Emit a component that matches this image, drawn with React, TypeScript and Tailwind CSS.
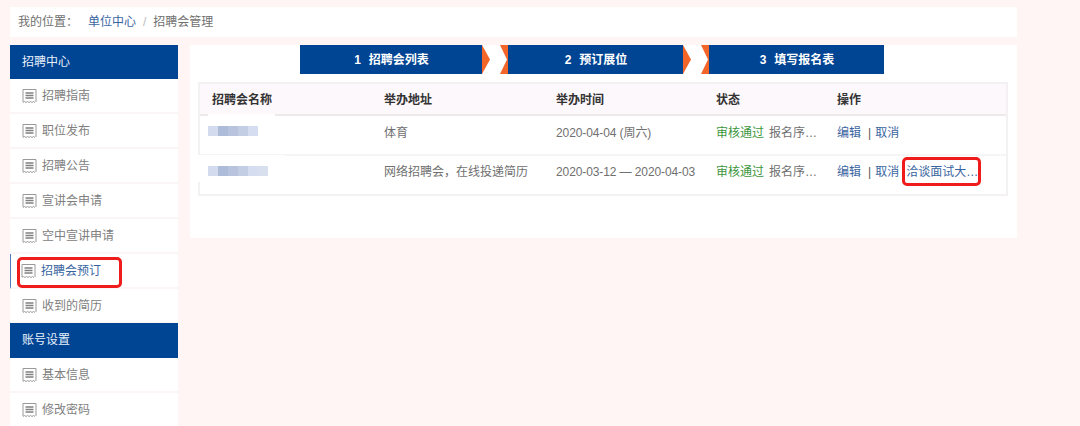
import React from 'react';

const font = "font-['Liberation_Sans','Noto_Sans_CJK_SC',sans-serif]";

function ReceiptIcon() {
  return (
    <svg width="15" height="16" viewBox="0 0 15 16" fill="none" className="shrink-0">
      <path d="M1 14V1.500H14V14" stroke="#999" strokeWidth="1" />
      <path d="M1 14.500l1.500-1 1.500 1 1.500-1 1.500 1 1.500-1 1.500 1 1.500-1 1.500 1" stroke="#999" strokeWidth="1" />
      <path d="M3.500 5H11.500M3.500 7.500H11.500M3.500 10H11.500" stroke="#808080" strokeWidth="1.500" />
    </svg>
  );
}

function MenuHeader({ children, second }: { children: React.ReactNode; second?: boolean }) {
  return (
    <div
      className={
        second
          ? 'relative h-[35px] -mt-[1px] bg-[#004494] text-[#e8f0fa] text-[12px] leading-[35px] pl-[12px]'
          : 'h-[34px] bg-[#004494] text-[#e8f0fa] text-[12px] leading-[35px] pl-[12px]'
      }
    >
      {children}
    </div>
  );
}

function MenuItem({ label, active, marked }: { label: string; active?: boolean; marked?: boolean }) {
  return (
    <div
      className={
        active
          ? 'relative h-[35px] bg-white border-b-2 border-[#fbf5f5] border-l border-l-[#4a7cc0] flex items-center gap-[5px] pl-[10px] text-[12px] text-[#3a659f]'
          : 'relative h-[35px] bg-white border-b-2 border-[#fbf5f5] flex items-center gap-[5px] pl-[12px] text-[12px] text-[#808080]'
      }
    >
      <ReceiptIcon />
      <span>{label}</span>
      {marked && (
        <div className="absolute left-[6px] top-[3px] w-[105px] h-[31px] border-[3px] border-[#f01c1c] rounded-[5px]" />
      )}
    </div>
  );
}

function Step({ n, label, width, notch, arrow }: { n: string; label: string; width: string; notch?: boolean; arrow?: boolean }) {
  return (
    <div className="flex h-[29px]">
      {notch && (
        <svg width="8" height="29" viewBox="0 0 8 29">
          <path d="M0 0H8V29H0L7 14.500Z" fill="#f4652a" />
        </svg>
      )}
      <div className={`${width} bg-[#004494] text-white text-[12px] font-bold flex items-center justify-center gap-[8px] pl-[1px]`}>
        <span>{n}</span>
        <span>{label}</span>
      </div>
      {arrow && (
        <svg width="8" height="29" viewBox="0 0 8 29">
          <path d="M0 0L8 14.500L0 29Z" fill="#f4652a" />
        </svg>
      )}
    </div>
  );
}

function Blur({ wide }: { wide?: boolean }) {
  return (
    <div className={wide ? 'flex h-[10px] mt-[2px]' : 'flex h-[10px] mt-[1px]'}>
      <span className="w-[10px] bg-[#d3dcee]" />
      <span className="w-[10px] bg-[#adbdd9]" />
      <span className="w-[10px] bg-[#b8c3de]" />
      <span className="w-[10px] bg-[#c3cde3]" />
      <span className="w-[10px] bg-[#d5def0]" />
      {wide && <span className="w-[10px] bg-[#d8e0f0]" />}
    </div>
  );
}

function Row({ wide, address, time, last }: { wide?: boolean; address: string; time: string; last?: boolean }) {
  return (
    <div
      className={
        last
          ? 'flex h-[38px] pt-[8px] text-[12px] text-[#707070] leading-[17px]'
          : 'flex h-[40px] pt-[9px] text-[12px] text-[#707070] leading-[17px] border-b-2 border-[#f5f5f5]'
      }
    >
      <div className="w-[184px] pl-[8px]">
        <Blur wide={wide} />
      </div>
      <div className="w-[172px]">{address}</div>
      <div className="w-[160px] tracking-[-0.1px]">{time}</div>
      <div className="w-[121px] flex">
        <span className="text-[#3c963c] w-[53px]">审核通过</span>
        <span>报名序…</span>
      </div>
      <div className="flex-1 flex text-[#3a659f]">
        <span>编辑</span>
        <span className="ml-[7px] mr-[4px] text-[#555]">|</span>
        <span>取消</span>
        {last && (
          <span className="relative ml-[7px]">
            洽谈面试大…
            <div className="absolute -left-[4px] -top-[7px] w-[79px] h-[29px] border-[3px] border-[#f01c1c] rounded-[5px]" />
          </span>
        )}
      </div>
    </div>
  );
}

export default function App() {
  return (
    <div className={`${font} w-[1080px] h-[426px] overflow-hidden bg-[#fff5f5] pt-[7px] pl-[10px]`}>
      <div className="w-[1007px] h-[30px] bg-white flex items-center pl-[8px] text-[12px] text-[#707070]">
        <span className="w-[70px]">我的位置：</span>
        <span className="text-[#3a659f]">单位中心</span>
        <span className="mx-[7px] text-[#bbb]">/</span>
        <span>招聘会管理</span>
      </div>

      <div className="flex gap-[12px] mt-[8px] items-start">
        <div className="w-[168px]">
          <MenuHeader>招聘中心</MenuHeader>
          <MenuItem label="招聘指南" />
          <MenuItem label="职位发布" />
          <MenuItem label="招聘公告" />
          <MenuItem label="宣讲会申请" />
          <MenuItem label="空中宣讲申请" />
          <MenuItem label="招聘会预订" active marked />
          <MenuItem label="收到的简历" />
          <MenuHeader second>账号设置</MenuHeader>
          <MenuItem label="基本信息" />
          <MenuItem label="修改密码" />
        </div>

        <div className="w-[827px] h-[193px] bg-white px-[8px]">
          <div className="flex h-[29px] pl-[102px] gap-[10px]">
            <Step n="1" label="招聘会列表" width="w-[182px]" arrow />
            <Step n="2" label="预订展位" width="w-[175px]" notch arrow />
            <Step n="3" label="填写报名表" width="w-[175px]" notch />
          </div>
          <div className="relative mt-[8px] w-[810px] border-2 border-[#f3f1f2]">
            <div className="flex h-[32px] pt-[2px] items-center bg-[#fdf8fb] border-b-2 border-[#eeeaec] text-[12px] font-bold text-[#333]">
              <div className="w-[184px] pl-[12px]">招聘会名称</div>
              <div className="w-[172px]">举办地址</div>
              <div className="w-[160px]">举办时间</div>
              <div className="w-[121px]">状态</div>
              <div className="flex-1">操作</div>
            </div>
            <Row address="体育" time="2020-04-04 (周六)" />
            <Row wide last address="网络招聘会，在线投递简历" time="2020-03-12 — 2020-04-03" />
            {/* white smudges left by the redaction in the original shot */}
            <div className="absolute left-[8px] top-[30px] w-[67px] h-[2px] bg-white" />
            <div className="absolute -left-[2px] top-[71px] w-[86px] h-[3px] bg-white" />
            <div className="absolute -left-[2px] top-[71px] w-[2px] h-[27px] bg-white" />
          </div>
        </div>
      </div>
    </div>
  );
}
